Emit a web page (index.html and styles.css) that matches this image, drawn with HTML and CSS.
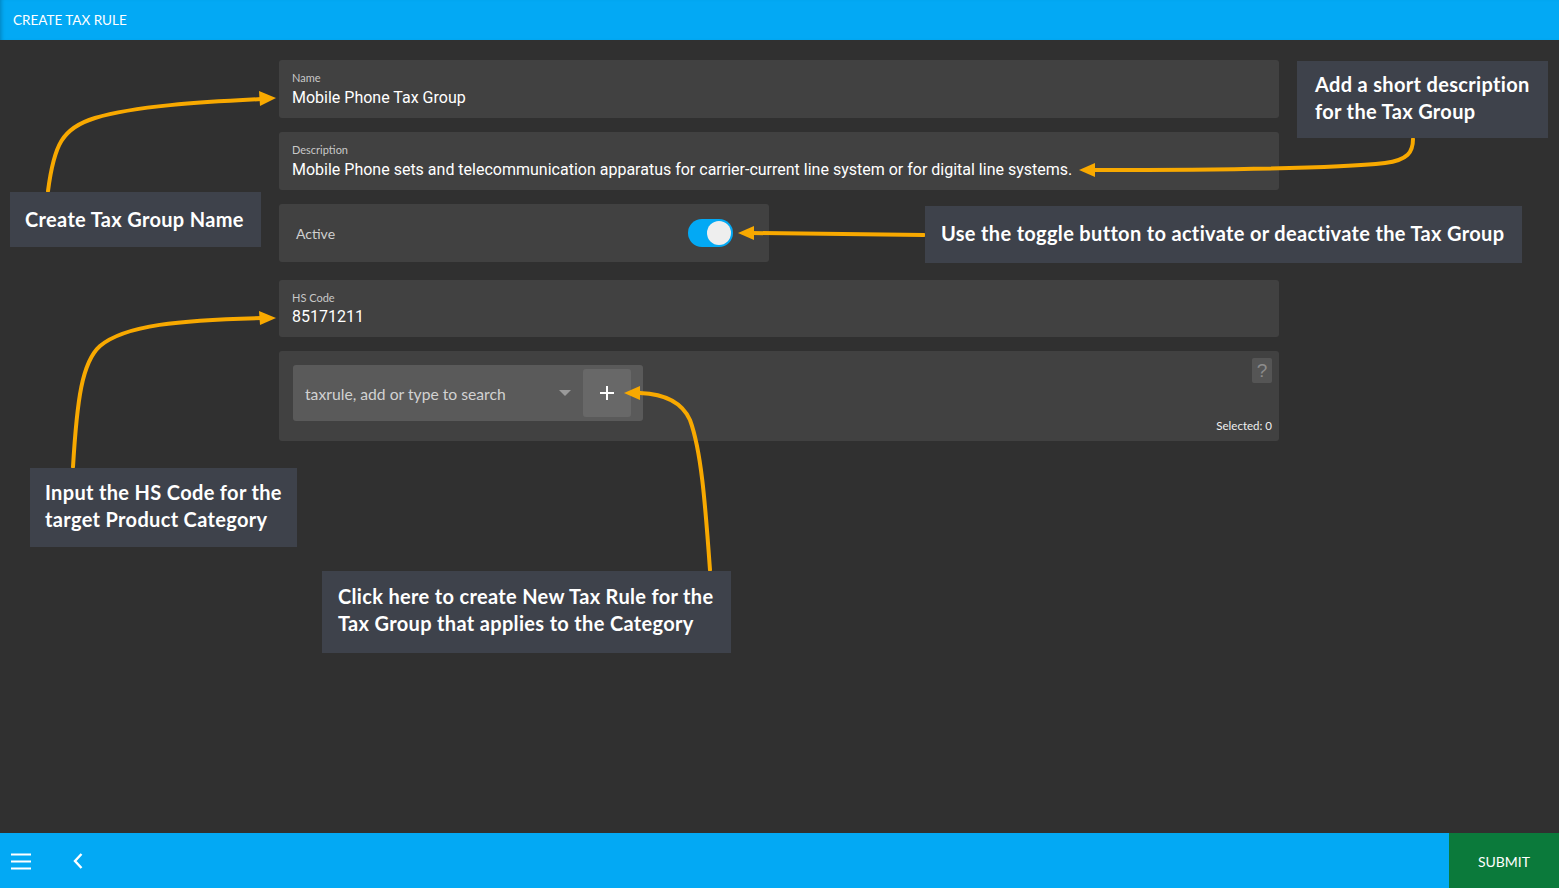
FILE: index.html
```html
<!DOCTYPE html>
<html lang="en">
<head>
<meta charset="utf-8">
<title>Create Tax Rule</title>
<link rel="stylesheet" href="styles.css">
</head>
<body>
<div class="app">
  <header class="topbar">CREATE TAX RULE</header>
  <main class="content">
    <div class="form">
      <div class="field">
        <div class="field-label">Name</div>
        <div class="field-value">Mobile Phone Tax Group</div>
      </div>
      <div class="field">
        <div class="field-label">Description</div>
        <div class="field-value">Mobile Phone sets and telecommunication apparatus for carrier-current line system or for digital line systems.</div>
      </div>
      <div class="field switch-field">
        <span class="switch-label">Active</span>
        <span class="switch"><span class="knob"></span></span>
      </div>
      <div class="field hs">
        <div class="field-label">HS Code</div>
        <div class="field-value">85171211</div>
      </div>
      <div class="field taxrule">
        <div class="select">
          <span class="select-text">taxrule, add or type to search</span>
          <span class="caret"></span>
          <span class="add-btn"><svg width="16" height="16" viewBox="0 0 16 16"><path d="M8 1V15M1 8H15" stroke="#fff" stroke-width="2" fill="none"/></svg></span>
        </div>
        <div class="taxrule-side">
          <span class="help">?</span>
          <span class="selected">Selected: 0</span>
        </div>
      </div>
    </div>
  </main>
  <footer class="bottombar">
    <div class="nav-icons">
      <svg class="icon" width="22" height="18" viewBox="0 0 22 18"><path d="M1 2.5H21M1 9.5H21M1 16.5H21" stroke="#fff" stroke-width="2" fill="none"/></svg>
      <svg class="icon back" width="12" height="18" viewBox="0 0 12 18"><path d="M9.5 2L3 9l6.5 7" stroke="#fff" stroke-width="2.4" fill="none"/></svg>
    </div>
    <button class="submit">SUBMIT</button>
  </footer>

  <div class="annotations">
    <svg class="arrows" width="1559" height="888" viewBox="0 0 1559 888">
      <g fill="none" stroke="#f8a900" stroke-width="4" stroke-linecap="round">
        <path d="M48 191 C54 145 62 128 95 118 C135 106 200 102 262 99"/>
        <path d="M1413 139 C1413 152 1408 160 1385 163 C1330 169 1200 170 1094 170"/>
        <path d="M924 235 L752 233"/>
        <path d="M73 467 C77 400 82 362 100 346 C125 325 180 320 262 318"/>
        <path d="M710 570 C705 500 701 450 690 420 C682 402 665 394 640 393"/>
      </g>
      <g fill="#f8a900">
        <path d="M276 98 L259 91 L260 106 Z"/>
        <path d="M1079 170 L1095 163 L1095 177 Z"/>
        <path d="M738 233 L754 226 L754 240 Z"/>
        <path d="M276 318 L259 311 L260 325 Z"/>
        <path d="M624 393 L640 386 L640 400 Z"/>
      </g>
    </svg>
    <div class="note note-name">Create Tax Group Name</div>
    <div class="note note-desc">Add a short description<br>for the Tax Group</div>
    <div class="note note-toggle">Use the toggle button to activate or deactivate the Tax Group</div>
    <div class="note note-hs">Input the HS Code for the<br>target Product Category</div>
    <div class="note note-rule">Click here to create New Tax Rule for the<br>Tax Group that applies to the Category</div>
  </div>
</div>
</body>
</html>
```
FILE: styles.css
```css
* { box-sizing: border-box; }
html, body { margin: 0; padding: 0; }
body {
  width: 1559px;
  height: 888px;
  overflow: hidden;
  background: #303030;
  font-family: Lato, "Liberation Sans", sans-serif;
}
.app {
  position: relative;
  width: 1559px;
  height: 888px;
  display: flex;
  flex-direction: column;
}
.topbar {
  height: 40px;
  flex: none;
  background: #03a9f4;
  color: #fff;
  font-size: 13.5px;
  line-height: 40px;
  padding-left: 13px;
  box-shadow: inset 4px 0 4px -3px rgba(0,0,0,0.25);
}
.content {
  flex: 1;
  padding: 20px 0 0 279px;
  background: #303030;
}
.form {
  width: 1000px;
  display: flex;
  flex-direction: column;
}
.field {
  background: #414141;
  border-radius: 3px;
  height: 58px;
  padding: 12px 13px 0;
  margin-bottom: 14px;
}
.field-label {
  font-size: 11px;
  line-height: 12px;
  color: #c8c8c8;
}
.field-value {
  font-family: Roboto, "Liberation Sans", sans-serif;
  font-size: 16px;
  line-height: 24px;
  margin-top: 2px;
  color: #fff;
}
.switch-field {
  width: 490px;
  display: flex;
  align-items: center;
  justify-content: space-between;
  padding: 0 36px 0 17px;
  margin-bottom: 18px;
}
.switch-label {
  font-size: 14px;
  color: #d0d0d0;
}
.switch {
  width: 45px;
  height: 28px;
  border-radius: 14px;
  background: #03a9f4;
  display: flex;
  align-items: center;
  justify-content: flex-end;
  padding-right: 2px;
}
.knob {
  width: 24px;
  height: 24px;
  border-radius: 50%;
  background: #eeeeee;
}
.hs { height: 57px; }
.hs .field-value { margin-top: 1px; }
.taxrule {
  height: 90px;
  padding: 14px 7px 0 14px;
  display: flex;
  justify-content: space-between;
}
.select {
  width: 350px;
  height: 56px;
  background: #5a5a5a;
  border-radius: 3px;
  display: flex;
  align-items: center;
  padding: 0 12px 0 12px;
}
.select-text {
  flex: 1;
  font-size: 15.7px;
  color: #d2d2d2;
  padding-top: 2px;
}
.caret {
  width: 0;
  height: 0;
  border-left: 6px solid transparent;
  border-right: 6px solid transparent;
  border-top: 6px solid #9a9a9a;
  margin-right: 12px;
}
.add-btn {
  width: 48px;
  height: 48px;
  background: #686868;
  border-radius: 3px;
  display: flex;
  align-items: center;
  justify-content: center;
}
.add-btn svg { display: block; }
.taxrule-side {
  display: flex;
  flex-direction: column;
  align-items: flex-end;
  justify-content: space-between;
  padding-top: 7px;
  padding-bottom: 9px;
  margin-top: -14px;
}
.help {
  width: 20px;
  height: 25px;
  background: #555;
  border-radius: 2px;
  color: #8c8c8c;
  font-size: 19px;
  line-height: 25px;
  text-align: center;
  font-family: "Liberation Sans", sans-serif;
}
.selected {
  font-size: 11.5px;
  color: #f0f0f0;
}
.bottombar {
  height: 55px;
  flex: none;
  background: #03a9f4;
  display: flex;
  justify-content: space-between;
  align-items: stretch;
}
.nav-icons {
  display: flex;
  align-items: center;
  padding-left: 10px;
  gap: 40px;
}
.icon { display: block; }
.submit {
  width: 110px;
  border: none;
  background: #0b7a3b;
  color: #fff;
  font-family: Lato, "Liberation Sans", sans-serif;
  font-size: 14px;
  padding: 2px 0 0;
}
.annotations {
  position: absolute;
  left: 0;
  top: 0;
  width: 1559px;
  height: 888px;
  pointer-events: none;
}
.arrows { position: absolute; left: 0; top: 0; }
.note {
  position: absolute;
  background: #3e424b;
  color: #fff;
  font-family: Lato, "Open Sans", sans-serif;
  font-weight: 700;
  font-size: 20px;
  letter-spacing: 0.33px;
  line-height: 27px;
  padding: 14px 15px;
  white-space: nowrap;
}
.note-name { left: 10px; top: 192px; width: 251px; height: 55px; }
.note-desc { left: 1297px; top: 61px; width: 251px; height: 77px; padding: 10px 18px; }
.note-toggle { left: 925px; top: 206px; width: 597px; height: 57px; padding: 14px 16px; }
.note-hs { left: 30px; top: 468px; width: 267px; height: 79px; padding: 11px 15px; }
.note-rule { left: 322px; top: 571px; width: 409px; height: 82px; padding: 12px 16px; }
```
